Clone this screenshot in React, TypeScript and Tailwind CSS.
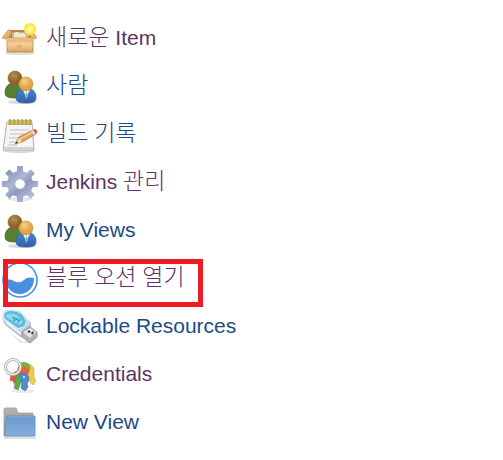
import type { ReactNode } from "react";

function NewItemIcon() {
  return (
    <svg viewBox="0 0 36 36" className="size-9 shrink-0" aria-hidden="true">
      <defs>
        <linearGradient id="box-front" x1="0" y1="0" x2="0" y2="1">
          <stop offset="0" stopColor="#ecbd7d" />
          <stop offset=".5" stopColor="#f4cf95" />
          <stop offset="1" stopColor="#d9a05c" />
        </linearGradient>
        <radialGradient id="spark">
          <stop offset="0" stopColor="#fffde0" />
          <stop offset=".3" stopColor="#fdf47c" />
          <stop offset=".75" stopColor="#fae73c" />
          <stop offset="1" stopColor="#fbe74a" stopOpacity="0" />
        </radialGradient>
      </defs>
      <ellipse cx="18" cy="31" rx="15" ry="2" fill="#000" opacity=".13" />
      <path d="M7 8h22v8H7z" fill="#b98447" />
      <path d="M10 10h17v6H10z" fill="#c9b48e" />
      <path d="M12 12c2-3 5-2 6 0 2-2 4-1 6 1v3H12z" fill="#efe7d2" />
      <path d="M6 8 0 16l5 1 4-5V8z" fill="#e5b475" stroke="#c08a4b" strokeWidth=".6" />
      <path d="M30 8l5 8-4 1-4-5V8z" fill="#e5b475" stroke="#c08a4b" strokeWidth=".6" />
      <path d="M5 16h26v14H5z" fill="url(#box-front)" stroke="#c18a4a" strokeWidth=".8" />
      <path d="M5 16h26l1 4H4z" fill="#e9bb7c" />
      <path d="M15 23h5v4h-5z" fill="#e2b06e" />
      <circle cx="28" cy="7" r="7" fill="url(#spark)" />
    </svg>
  );
}

function PeopleIcon({ id }: { id: string }) {
  return (
    <svg viewBox="0 0 36 36" className="size-9 shrink-0" aria-hidden="true">
      <defs>
        <radialGradient id={`${id}-back`} cx=".4" cy=".3">
          <stop offset="0" stopColor="#b88c4c" />
          <stop offset="1" stopColor="#8b632a" />
        </radialGradient>
        <radialGradient id={`${id}-front`} cx=".4" cy=".3">
          <stop offset="0" stopColor="#fbcf88" />
          <stop offset="1" stopColor="#e3a048" />
        </radialGradient>
        <linearGradient id={`${id}-blue`} x1="0" y1="0" x2="0" y2="1">
          <stop offset="0" stopColor="#4c89cb" />
          <stop offset="1" stopColor="#2a62a6" />
        </linearGradient>
      </defs>
      <ellipse cx="20" cy="32" rx="14" ry="2" fill="#000" opacity=".14" />
      <path d="M3 23c0-7 4-10 9-10s9 4 9 10c0 4-4 5-9 5s-9-1-9-5z" fill="#577f30" stroke="#456c20" strokeWidth=".7" />
      <circle cx="13" cy="8" r="7" fill={`url(#${id}-back)`} stroke="#86632f" strokeWidth=".6" />
      <path d="M14 28c0-7 4-10 10-10s10 3 10 10c0 4-4 5-10 5s-10-1-10-5z" fill={`url(#${id}-blue)`} stroke="#2d61a0" strokeWidth=".7" />
      <path d="M21 20l3 7 4-7z" fill="#f4f6f8" />
      <path d="M24 21l-1 5 1 3 2-3z" fill="#9bb0c7" />
      <circle cx="24" cy="14" r="7" fill={`url(#${id}-front)`} stroke="#cc8e3f" strokeWidth=".6" />
    </svg>
  );
}

function NotepadIcon() {
  return (
    <svg viewBox="0 0 36 36" className="size-9 shrink-0" aria-hidden="true">
      <ellipse cx="17" cy="33" rx="16" ry="2" fill="#000" opacity=".15" />
      <path d="M5 4h25l2 28H1z" fill="#f4f4f2" stroke="#b2b2b0" />
      <path d="M2 29h29v3H1z" fill="#d3d3d1" />
      <path d="M8 12h19M8 16h14M7 20h11M7 24h7M6 27h9" stroke="#c2c2c1" />
      <path d="M6 2h24v5H6z" fill="#cbb85e" />
      <path d="M8 1v6m4-6v6m4-6v6m4-6v6m4-6v6m4-6v6" stroke="#94843c" strokeWidth="1.2" />
      <path d="M7 1v5m4-5v5m4-5v5m4-5v5m4-5v5m4-5v5" stroke="#e0d27d" strokeWidth=".8" />
      <path d="M13 26l4-7 14-7 3 4-14 8z" fill="#e5a355" stroke="#a87540" strokeWidth=".8" />
      <path d="M17 21l14-8 1 1-14 8z" fill="#ffd08e" />
      <path d="M13 26l4-6 3 4z" fill="#f3dfb7" />
      <path d="M13 26l2-3 1 2z" fill="#493d2b" />
      <path d="M29 13l2-1 3 3-2 2z" fill="#ddd" />
      <path d="M31 12l2-1q3 1 2 4l-1 1z" fill="#db5b49" />
    </svg>
  );
}

const gearTeeth = [0, 45, 90, 135, 180, 225, 270, 315];

function GearIcon() {
  return (
    <svg viewBox="0 0 36 36" className="size-9 shrink-0" aria-hidden="true">
      <defs>
        <linearGradient id="gear-fill" gradientUnits="userSpaceOnUse" x1="5" y1="4" x2="30" y2="32">
          <stop offset="0" stopColor="#8893b8" />
          <stop offset=".4" stopColor="#adb8d5" />
          <stop offset=".6" stopColor="#8e98bd" />
          <stop offset="1" stopColor="#b9c1dc" />
        </linearGradient>
        <mask id="gear-shape">
          <circle cx="18" cy="18" r="13" fill="#fff" />
          {gearTeeth.map((angle) => (
            <path key={angle} d="M13 8l2-3V0h6v5l2 3z" fill="#fff" transform={`rotate(${angle} 18 18)`} />
          ))}
          <circle cx="18" cy="18" r="5" fill="#000" />
        </mask>
      </defs>
      <ellipse cx="18" cy="33" rx="13" ry="2" fill="#000" opacity=".1" />
      <path d="M0 0h36v36H0z" fill="url(#gear-fill)" mask="url(#gear-shape)" />
      <circle cx="18" cy="18" r="5.5" fill="none" stroke="#a4aecb" />
    </svg>
  );
}

function OceanIcon() {
  return (
    <svg viewBox="0 0 36 36" className="size-9 shrink-0" aria-hidden="true">
      <circle cx="18" cy="18" r="17" fill="#fff" stroke="#4a90e2" strokeWidth="1.6" />
      <path d="M4 18c4-1 6 0 9 1.500 3 1.500 6 1 9-1.500 3-3 6-3 10-2 .5 9-6 16-14 16S4 26 4 18z" fill="#4a90e2" />
    </svg>
  );
}

function UsbIcon() {
  return (
    <svg viewBox="0 0 36 36" className="size-9 shrink-0" aria-hidden="true">
      <defs>
        <linearGradient id="usb-shell" x1="0" y1="0" x2="1" y2="1">
          <stop offset="0" stopColor="#fafcff" />
          <stop offset=".6" stopColor="#e0e6ee" />
          <stop offset="1" stopColor="#a5b0bf" />
        </linearGradient>
      </defs>
      <path d="M7 22l14 10 14-4-7 5H18z" fill="#000" opacity=".1" />
      <path d="M1 7Q0 1 7 0q6-1 11 2l10 10 1 5-10 10L2 13z" fill="url(#usb-shell)" stroke="#b8c2cf" strokeWidth=".8" />
      <path d="M2 6q0-5 7-5 7 0 11 4l4 6-2 5-6 2L3 9z" fill="#58bfe4" />
      <path d="M4 5q4-3 11 0l6 7-3 3L5 8z" fill="#8fd9ef" />
      <path d="M10 7l8 4m-6-4v4l4-3m0 5 2-4" fill="none" stroke="#448fae" />
      <path d="M2 10l17 12 9-9 1 4-10 10L3 15z" fill="#b9c1d3" />
      <path d="M4 12l15 12" stroke="#f2f5fa" strokeWidth="2" />
      <path d="M20 22l8-5 7 5v5l-7 6-8-6z" fill="#b0b3b7" stroke="#85888c" strokeWidth=".7" />
      <path d="M21 22l7-4 6 4-6 6z" fill="#e6e9ea" />
      <path d="M25 22l2-2 2 2-2 1zm4 1 2-2 1 2-2 2z" fill="#3c4146" />
    </svg>
  );
}

function KeysIcon() {
  return (
    <svg viewBox="0 0 36 36" className="size-9 shrink-0" aria-hidden="true">
      <ellipse cx="21" cy="33" rx="12" ry="2" fill="#000" opacity=".08" />
      <path d="M22 7q7-3 10 4v8l2 4-3 4-5-5-4-9z" fill="#edcb4d" stroke="#cda63a" strokeWidth=".6" />
      <path d="M16 6q6-4 11 0 3 4 0 8l-8 3z" fill="#76b14b" />
      <path d="M16 9q8-3 11 4l-1 5-6 3-5-8z" fill="#e36445" />
      <path d="M13 14q5-3 8 1l-4 7-5 3-2-3-2 1 1-6z" fill="#df5b45" stroke="#c74939" strokeWidth=".6" />
      <path d="M14 18q6-4 7 2l-3 7-2 5-4-2 1-3-1-2 2-3z" fill="#5dac51" stroke="#459142" strokeWidth=".6" />
      <path d="M18 16q8-2 9 5l-2 5 1 3-3 4-4-3 1-4-1-5-2-2z" fill="#4d8ed0" stroke="#3770aa" strokeWidth=".7" />
      <circle cx="22" cy="19" r="1" fill="#e9f2fb" />
      <circle cx="11" cy="9" r="7.500" fill="none" stroke="#a5a8a8" strokeWidth="3" />
      <circle cx="11" cy="9" r="7.500" fill="none" stroke="#f0f1f0" strokeWidth="1.500" />
    </svg>
  );
}

function FolderIcon() {
  return (
    <svg viewBox="0 0 36 36" className="size-9 shrink-0" aria-hidden="true">
      <defs>
        <linearGradient id="folder-front" x1="0" y1="0" x2="0" y2="1">
          <stop offset="0" stopColor="#6b98cc" />
          <stop offset="1" stopColor="#86afdc" />
        </linearGradient>
        <linearGradient id="folder-back" x1="0" y1="0" x2="0" y2="1">
          <stop offset="0" stopColor="#b5b5b3" />
          <stop offset="1" stopColor="#858585" />
        </linearGradient>
      </defs>
      <path d="M2 31h32v2H2z" fill="#000" opacity=".12" />
      <path d="M2 3l1-1h11l2 5h15v23H2z" fill="url(#folder-back)" stroke="#a0a09e" strokeWidth=".8" />
      <path d="M5 10h28v20H3V20z" fill="url(#folder-front)" stroke="#5f8dbf" strokeWidth=".8" />
      <path d="M6 11h26" stroke="#8fb4dd" />
    </svg>
  );
}

type Task = { label: string; icon: ReactNode; visited?: boolean; marked?: boolean };

const tasks: Task[] = [
  { label: "새로운 Item", icon: <NewItemIcon />, visited: true },
  { label: "사람", icon: <PeopleIcon id="people" /> },
  { label: "빌드 기록", icon: <NotepadIcon /> },
  { label: "Jenkins 관리", icon: <GearIcon />, visited: true },
  { label: "My Views", icon: <PeopleIcon id="views" /> },
  { label: "블루 오션 열기", icon: <OceanIcon />, visited: true, marked: true },
  { label: "Lockable Resources", icon: <UsbIcon /> },
  { label: "Credentials", icon: <KeysIcon />, visited: true },
  { label: "New View", icon: <FolderIcon /> },
];

/** Sets each Hangul word in the lighter, slightly larger Korean face. */
function Label({ text }: { text: string }) {
  const runs = text.split(/([가-힣]+)/).filter(Boolean);
  return (
    <span className="pb-1">
      {runs.map((run, index) =>
        /[가-힣]/.test(run) ? (
          <span key={index} className="font-['Noto_Sans_CJK_KR',sans-serif] text-[23px] leading-4 font-light">
            {run}
          </span>
        ) : (
          run
        ),
      )}
    </span>
  );
}

export default function App() {
  return (
    <nav className="bg-white pt-4 pb-3 pl-0.5 font-['Liberation_Sans','Noto_Sans_CJK_KR',sans-serif] text-[21px] leading-6">
      <ul>
        {tasks.map((task) => (
          <li key={task.label} className="relative h-12">
            <a
              href="#"
              className={`inline-flex h-12 items-center gap-2 whitespace-nowrap ${
                task.visited ? "text-[#5c3566]" : "text-[#204a87]"
              }`}
            >
              {task.icon}
              <Label text={task.label} />
            </a>
            {task.marked && (
              <span className="pointer-events-none absolute top-[3px] left-px h-12 w-[200px] border-5 border-[#ed1c24]" />
            )}
          </li>
        ))}
      </ul>
    </nav>
  );
}
